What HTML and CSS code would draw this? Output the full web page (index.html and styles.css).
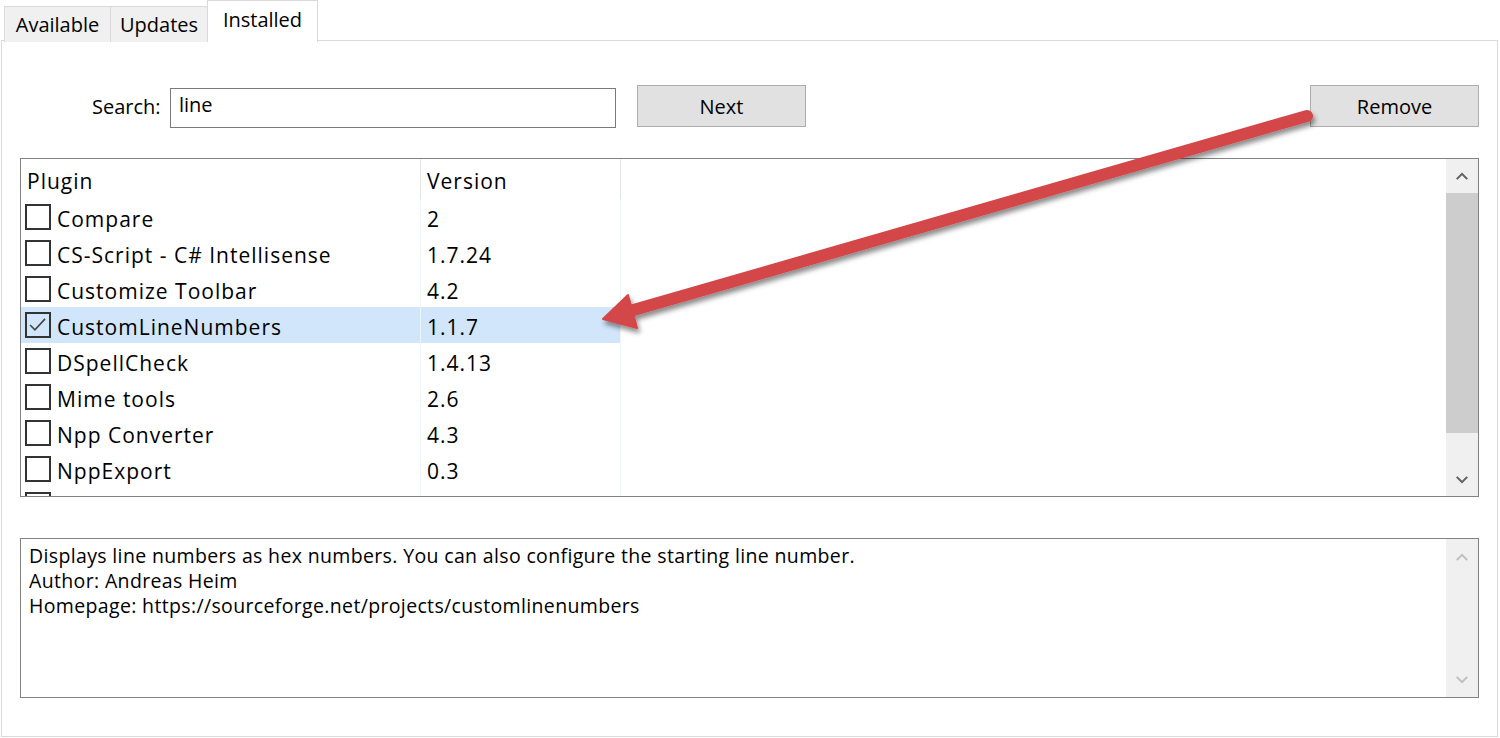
FILE: index.html
```html
<!DOCTYPE html>
<html>
<head>
<meta charset="utf-8">
<link rel="stylesheet" href="styles.css">
</head>
<body>
<div class="window">
  <div class="tabs">
    <div class="tab t-avail">Available</div>
    <div class="tab t-upd">Updates</div>
    <div class="tab active">Installed</div>
  </div>
  <div class="panel">
    <div class="toolbar">
      <label class="search-label">Search:</label>
      <div class="search-input">line</div>
      <button class="btn next">Next</button>
      <div class="spacer"></div>
      <button class="btn">Remove</button>
    </div>
    <div class="list">
      <div class="list-body">
        <div class="row header">
          <div class="col c1">Plugin</div>
          <div class="col c2">Version</div>
          <div class="col c3"></div>
        </div>
        <div class="row"><div class="col c1"><span class="cb"></span><span class="txt">Compare</span></div><div class="col c2">2</div><div class="col c3"></div></div>
        <div class="row"><div class="col c1"><span class="cb"></span><span class="txt">CS-Script - C# Intellisense</span></div><div class="col c2">1.7.24</div><div class="col c3"></div></div>
        <div class="row"><div class="col c1"><span class="cb"></span><span class="txt">Customize Toolbar</span></div><div class="col c2">4.2</div><div class="col c3"></div></div>
        <div class="row selected"><div class="col c1"><span class="cb checked"><svg viewBox="0 0 25 25" width="22" height="22"><path d="M3.5 12.5 L9 18 L20.5 5.5" fill="none" stroke="#444" stroke-width="1.8"/></svg></span><span class="txt">CustomLineNumbers</span></div><div class="col c2">1.1.7</div><div class="col c3"></div></div>
        <div class="row"><div class="col c1"><span class="cb"></span><span class="txt">DSpellCheck</span></div><div class="col c2">1.4.13</div><div class="col c3"></div></div>
        <div class="row"><div class="col c1"><span class="cb"></span><span class="txt">Mime tools</span></div><div class="col c2">2.6</div><div class="col c3"></div></div>
        <div class="row"><div class="col c1"><span class="cb"></span><span class="txt">Npp Converter</span></div><div class="col c2">4.3</div><div class="col c3"></div></div>
        <div class="row"><div class="col c1"><span class="cb"></span><span class="txt">NppExport</span></div><div class="col c2">0.3</div><div class="col c3"></div></div>
        <div class="row"><div class="col c1"><span class="cb"></span></div><div class="col c2"></div><div class="col c3"></div></div>
      </div>
      <div class="scrollbar">
        <div class="arrow-btn"><svg viewBox="0 0 16 10" width="14" height="9"><path d="M2 8 L8 2 L14 8" fill="none" stroke="#606060" stroke-width="2.4"/></svg></div>
        <div class="track"><div class="thumb"></div></div>
        <div class="arrow-btn"><svg viewBox="0 0 16 10" width="14" height="9"><path d="M2 2 L8 8 L14 2" fill="none" stroke="#606060" stroke-width="2.4"/></svg></div>
      </div>
    </div>
    <div class="desc">
      <div class="desc-text">
        <div>Displays line numbers as hex numbers. You can also configure the starting line number.</div>
        <div>Author: Andreas Heim</div>
        <div>Homepage: https://sourceforge.net/projects/customlinenumbers</div>
      </div>
      <div class="scrollbar disabled">
        <div class="arrow-btn"><svg viewBox="0 0 16 10" width="14" height="9"><path d="M2 8 L8 2 L14 8" fill="none" stroke="#bfbfbf" stroke-width="2.4"/></svg></div>
        <div class="track"></div>
        <div class="arrow-btn"><svg viewBox="0 0 16 10" width="14" height="9"><path d="M2 2 L8 8 L14 2" fill="none" stroke="#bfbfbf" stroke-width="2.4"/></svg></div>
      </div>
    </div>
  </div>
  <svg class="callout" width="1500" height="738" viewBox="0 0 1500 738">
    <defs>
      <filter id="sh" x="-10%" y="-10%" width="120%" height="130%">
        <feDropShadow dx="2" dy="4" stdDeviation="2.5" flood-color="#000" flood-opacity="0.45"/>
      </filter>
    </defs>
    <g filter="url(#sh)" fill="#d4464a" stroke="#d4464a">
      <line x1="630" y1="311" x2="1307" y2="116" stroke-width="12" stroke-linecap="round"/>
      <polygon points="603,319 628,295 637,328" stroke-width="2" stroke-linejoin="round"/>
    </g>
  </svg>
</div>
</body>
</html>
```
FILE: styles.css
```css
* { box-sizing: border-box; }
html, body { margin: 0; padding: 0; background: #fff; }
body { font-family: "Open Sans", "Noto Sans", sans-serif; color: #000; }
.window { position: relative; width: 1500px; height: 738px; overflow: hidden; background: #fff; }

.tabs { display: flex; align-items: flex-end; height: 41px; padding-left: 4px; position: relative; z-index: 1; }
.tab {
  height: 36px; padding: 0; margin-bottom: -1px; text-align: center; white-space: nowrap;
  background: #f0f0f0; border: 1px solid #d9d9d9; border-bottom: none; border-right: none;
  font-size: 20px; line-height: 36px;
}
.t-avail { width: 106px; }
.t-upd { width: 97px; }
.tab.active {
  width: 111px; height: 42px; background: #fff; border-right: 1px solid #d9d9d9; line-height: 38px;
  margin-bottom: -1px; position: relative;
}
.panel {
  margin: -1px 2px 0 1px; height: 697px; border: 1px solid #d9d9d9;
  padding: 44px 18px 0 18px; background: #fff;
}
.toolbar { display: flex; align-items: center; height: 42px; }
.search-label { font-size: 20px; margin-left: 72px; width: 78px; }
.search-input {
  width: 446px; height: 40px; border: 1px solid #7a7a7a; font-size: 20px;
  padding: 0 8px; line-height: 32px; align-self: flex-end; margin-bottom: -1px;
}
.btn {
  width: 169px; height: 42px; background: #e1e1e1; border: 1px solid #adadad;
  font-family: inherit; font-size: 20px; color: #000; padding: 0;
}
.next { margin-left: 21px; }
.spacer { flex: 1; }

.list {
  margin-top: 31px; height: 339px; border: 1px solid #828282; display: flex; overflow: hidden;
}
.list-body { flex: 1; overflow: hidden; }
.row { display: flex; height: 36px; font-size: 21px; line-height: 36px; letter-spacing: 1px; }
.row.header { height: 40px; line-height: 44px; }
.col { white-space: nowrap; }
.c1 { width: 400px; padding-left: 4px; display: flex; align-items: flex-start; border-right: 1px solid #eef4fb; }
.c2 { width: 200px; padding-left: 6px; padding-top: 2px; border-right: 1px solid #eef4fb; }
.c3 { flex: 1; }
.txt { padding-top: 2px; display: block; }
.header .c1, .header .c2 { border-right-color: #e5e5e5; padding-top: 0; }
.header .c1 { padding-left: 6px; }
.row.selected .c1, .row.selected .c2 { background: #d1e5fb; }
.cb {
  width: 26px; height: 26px; border: 2px solid #333; margin: 5px 6px 0 0; flex: none;
  display: flex; align-items: center; justify-content: center; background: #fff;
}
.cb.checked { background: transparent; }

.scrollbar { width: 32px; background: #f0f0f0; display: flex; flex-direction: column; flex: none; }
.arrow-btn { height: 34px; display: flex; align-items: center; justify-content: center; flex: none; }
.track { flex: 1; }
.thumb { height: 240px; background: #cdcdcd; }

.desc {
  margin-top: 41px; height: 160px; border: 1px solid #828282; display: flex;
}
.desc-text { flex: 1; padding: 4px 8px; font-size: 19.5px; line-height: 25px; letter-spacing: 0.35px; }
.scrollbar.disabled .arrow-btn { height: 36px; }

.callout { position: absolute; left: 0; top: 0; pointer-events: none; }
```
